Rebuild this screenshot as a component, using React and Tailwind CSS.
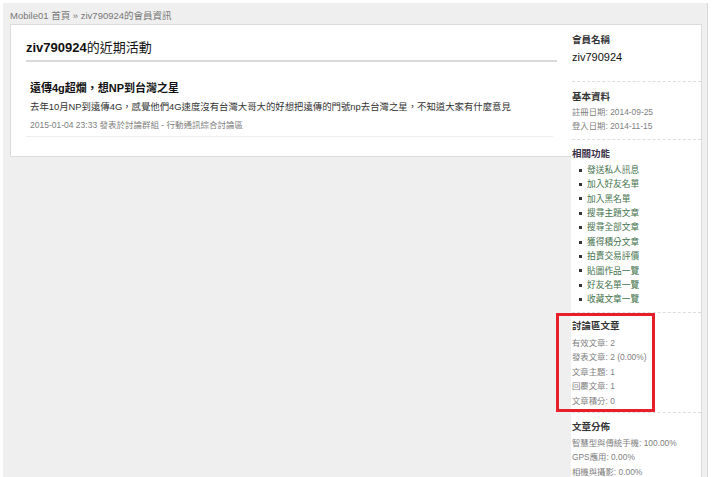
import React from "react";

const links = [
  "發送私人訊息",
  "加入好友名單",
  "加入黑名單",
  "搜尋主題文章",
  "搜尋全部文章",
  "獲得積分文章",
  "拍賣交易評價",
  "貼圖作品一覽",
  "好友名單一覽",
  "收藏文章一覽",
];

const postStats = [
  "有效文章: 2",
  "發表文章: 2 (0.00%)",
  "文章主題: 1",
  "回覆文章: 1",
  "文章積分: 0",
];

const dist = ["智慧型與傳統手機: 100.00%", "GPS應用: 0.00%", "相機與攝影: 0.00%"];

const Heading = ({ children }) => (
  <p className="text-[9.5px] leading-[16px] font-bold text-[#333]">{children}</p>
);

const Small = ({ children }) => (
  <p className="text-[8.4px] leading-[14.4px] text-[#808080] whitespace-nowrap">{children}</p>
);

const App = () => {
  return (
    <div className="relative w-[720px] h-[477px] overflow-hidden bg-white font-[Arial,'Liberation_Sans','Noto_Sans_CJK_TC',sans-serif]">
      <div className="ml-[3px] mt-[3px] w-[705px] h-[474px] bg-[#efefef] border-r border-[#d8d8d8] pl-[7px]">
        {/* breadcrumb */}
        <div className="h-[21px] flex items-center text-[9.5px] text-[#777] pt-[6px]">
          Mobile01 首頁 » ziv790924的會員資訊
        </div>

        <div className="flex items-start">
          {/* main */}
          <div className="w-[561px] h-[133px] bg-white border-l border-t border-b border-[#dcdcdc] pl-[15px] pr-[14px] pt-[14px]">
            <h2 className="text-[13px] leading-[18px] text-[#111] pb-[3px] border-b-2 border-[#d9d9d9]">
              <span className="font-bold">ziv790924</span>的近期活動
            </h2>
            <div className="pl-[4px] pr-[4px] pt-[18px] pb-[4px] mr-[4px] border-b border-[#eee]">
              <p className="text-[11px] leading-[16px] font-bold text-[#111]">遠傳4g超爛，想NP到台灣之星</p>
              <p className="mt-[3px] text-[9.4px] leading-[16px] text-[#333] whitespace-nowrap">
                去年10月NP到遠傳4G，感覺他們4G速度沒有台灣大哥大的好想把遠傳的門號np去台灣之星，不知道大家有什麼意見
              </p>
              <p className="mt-[3px] text-[8.5px] leading-[14px] text-[#808080] whitespace-nowrap">
                2015-01-04 23:33 發表於討論群組 - 行動通訊綜合討論區
              </p>
            </div>
          </div>

          {/* sidebar */}
          <div className="w-[131px] h-[460px] bg-white border-t border-r border-[#dcdcdc] pl-[1px]">
            <div className="pt-[7px] pb-[15px] border-b border-dashed border-[#ddd]">
              <Heading>會員名稱</Heading>
              <p className="text-[11px] leading-[18px] text-[#111]">ziv790924</p>
            </div>
            <div className="pt-[7px] pb-[5px] border-b border-dashed border-[#ddd]">
              <Heading>基本資料</Heading>
              <Small>註冊日期: 2014-09-25</Small>
              <Small>登入日期: 2014-11-15</Small>
            </div>
            <div className="pt-[6px] pb-[5px] border-b border-dashed border-[#ddd]">
              <p className="text-[9.5px] leading-[16px] font-bold text-[#3a3048]">相關功能</p>
              <ul className="mt-[1px]">
                {links.map((l) => (
                  <li key={l} className="flex items-center text-[8.7px] leading-[14.4px] text-[#44724c]">
                    <span className="ml-[7px] mr-[5px] w-[3px] h-[3px] bg-[#333]"></span>
                    {l}
                  </li>
                ))}
              </ul>
            </div>
            <div className="pt-[5px] pb-[4px] border-b border-dashed border-[#ddd]">
              <Heading>討論區文章</Heading>
              <div className="mt-[2px]">
                {postStats.map((s) => (
                  <Small key={s}>{s}</Small>
                ))}
              </div>
            </div>
            <div className="pt-[6px]">
              <Heading>文章分佈</Heading>
              <div className="mt-[1px]">
                {dist.map((s) => (
                  <Small key={s}>{s}</Small>
                ))}
              </div>
            </div>
          </div>
        </div>
      </div>

      {/* annotation box */}
      <div className="absolute left-[556px] top-[313px] w-[99px] h-[99px] border-[3px] border-[#e61f2a]"></div>
    </div>
  );
};

export default App;
